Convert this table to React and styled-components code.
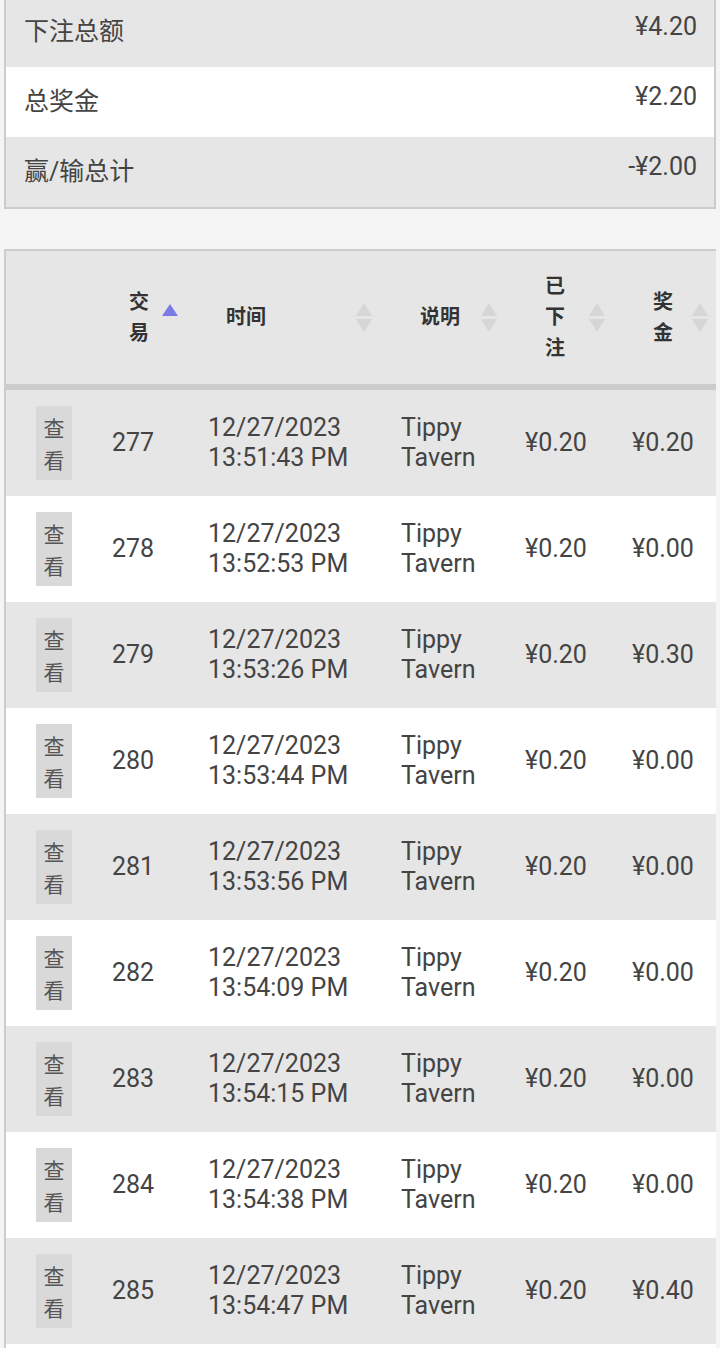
import React from "react";
import styled, { createGlobalStyle } from "styled-components";

const Global = createGlobalStyle`
  html, body { margin: 0; padding: 0; background: #f5f5f5; }
  body { font-family: Roboto, "Noto Sans CJK SC", sans-serif; color: #444; }
`;

const Page = styled.div`
  padding: 0 4px;
  margin-top: -3px;
`;

const Summary = styled.div`
  border: 2px solid #ccc;
  border-top: none;
  margin-bottom: 40px;
`;

const SummaryRow = styled.div`
  display: flex;
  justify-content: space-between;
  align-items: center;
  height: 70px;
  padding: 0 17px 0 18px;
  background: ${(p) => (p.$alt ? "#fff" : "#e6e6e6")};
`;

const SummaryLabel = styled.span`
  font-size: 25px;
  line-height: 30px;
  color: #444;
`;

const SummaryValue = styled.span`
  font-size: 25px;
  line-height: 30px;
  color: #444;
  align-self: flex-start;
  padding-top: 15px;
`;

const TableWrap = styled.div`
  border-left: 2px solid #ccc;
  border-top: 2px solid #ccc;
  background: #fff;
  padding-bottom: 20px;
`;

const Table = styled.table`
  width: 100%;
  table-layout: fixed;
  border-collapse: separate;
  border-spacing: 0;
`;

const Th = styled.th`
  position: relative;
  background: #e6e6e6;
  padding: 20px 30px 20px 40px;
  text-align: left;
  vertical-align: middle;
  font-size: 20px;
  line-height: 31px;
  font-weight: 700;
  color: #333;
  border-bottom: 6px solid #ccc;
`;

const SortIcon = styled.svg`
  position: absolute;
  right: 8px;
  top: 50%;
  margin-top: -16px;
  width: 16px;
  height: 30px;
`;

const Tr = styled.tr`
  background: ${(p) => (p.$alt ? "#fff" : "#e6e6e6")};
`;

const Td = styled.td`
  height: 106px;
  box-sizing: border-box;
  padding: 0 0 0 20px;
  vertical-align: middle;
  text-align: left;
  font-size: 25px;
  line-height: 30px;
  color: #444;
  &:nth-child(1) { padding-left: 30px; }
  &:nth-child(2) { padding-left: 23px; }
  &:nth-child(3) { padding-left: 22px; }
  &:nth-child(4) { padding-left: 21px; }
  &:nth-child(5) { padding-left: 20px; }
  &:nth-child(6) { padding-left: 19px; }
`;

const ViewButton = styled.button`
  display: block;
  width: 36px;
  padding: 5px 7px;
  border: none;
  margin: 0;
  background: #d9d9d9;
  color: #555;
  font-family: "Noto Sans CJK SC", sans-serif;
  font-size: 21px;
  line-height: 32px;
  text-align: center;
  word-break: break-all;
`;

function Sort({ active }) {
  if (active) {
    return (
      <SortIcon viewBox="0 0 16 30">
        <polygon points="8,2 16,14 0,14" fill="#7b7be6" />
      </SortIcon>
    );
  }
  return (
    <SortIcon viewBox="0 0 16 30">
      <polygon points="8,1 16,14 0,14" fill="#d6d6d6" />
      <polygon points="0,17 16,17 8,30" fill="#d6d6d6" />
    </SortIcon>
  );
}

const rows = [
  ["277", "12/27/2023 13:51:43 PM", "¥0.20", "¥0.20"],
  ["278", "12/27/2023 13:52:53 PM", "¥0.20", "¥0.00"],
  ["279", "12/27/2023 13:53:26 PM", "¥0.20", "¥0.30"],
  ["280", "12/27/2023 13:53:44 PM", "¥0.20", "¥0.00"],
  ["281", "12/27/2023 13:53:56 PM", "¥0.20", "¥0.00"],
  ["282", "12/27/2023 13:54:09 PM", "¥0.20", "¥0.00"],
  ["283", "12/27/2023 13:54:15 PM", "¥0.20", "¥0.00"],
  ["284", "12/27/2023 13:54:38 PM", "¥0.20", "¥0.00"],
  ["285", "12/27/2023 13:54:47 PM", "¥0.20", "¥0.40"],
];

export default function App() {
  return (
    <Page>
      <Global />
      <Summary>
        <SummaryRow>
          <SummaryLabel>下注总额</SummaryLabel>
          <SummaryValue>¥4.20</SummaryValue>
        </SummaryRow>
        <SummaryRow $alt>
          <SummaryLabel>总奖金</SummaryLabel>
          <SummaryValue>¥2.20</SummaryValue>
        </SummaryRow>
        <SummaryRow>
          <SummaryLabel>赢/输总计</SummaryLabel>
          <SummaryValue>-¥2.00</SummaryValue>
        </SummaryRow>
      </Summary>
      <TableWrap>
        <Table>
          <colgroup>
            <col style={{ width: 83 }} />
            <col style={{ width: 97 }} />
            <col style={{ width: 194 }} />
            <col style={{ width: 125 }} />
            <col style={{ width: 108 }} />
            <col style={{ width: 103 }} />
          </colgroup>
          <thead>
            <tr>
              <Th />
              <Th>
                交易
                <Sort active />
              </Th>
              <Th>
                时间
                <Sort />
              </Th>
              <Th>
                说明
                <Sort />
              </Th>
              <Th>
                已下注
                <Sort />
              </Th>
              <Th>
                奖金
                <Sort />
              </Th>
            </tr>
          </thead>
          <tbody>
            {rows.map((r, i) => (
              <Tr key={r[0]} $alt={i % 2 === 1}>
                <Td>
                  <ViewButton>查看</ViewButton>
                </Td>
                <Td>{r[0]}</Td>
                <Td>{r[1]}</Td>
                <Td>Tippy Tavern</Td>
                <Td>{r[2]}</Td>
                <Td>{r[3]}</Td>
              </Tr>
            ))}
          </tbody>
        </Table>
      </TableWrap>
    </Page>
  );
}
